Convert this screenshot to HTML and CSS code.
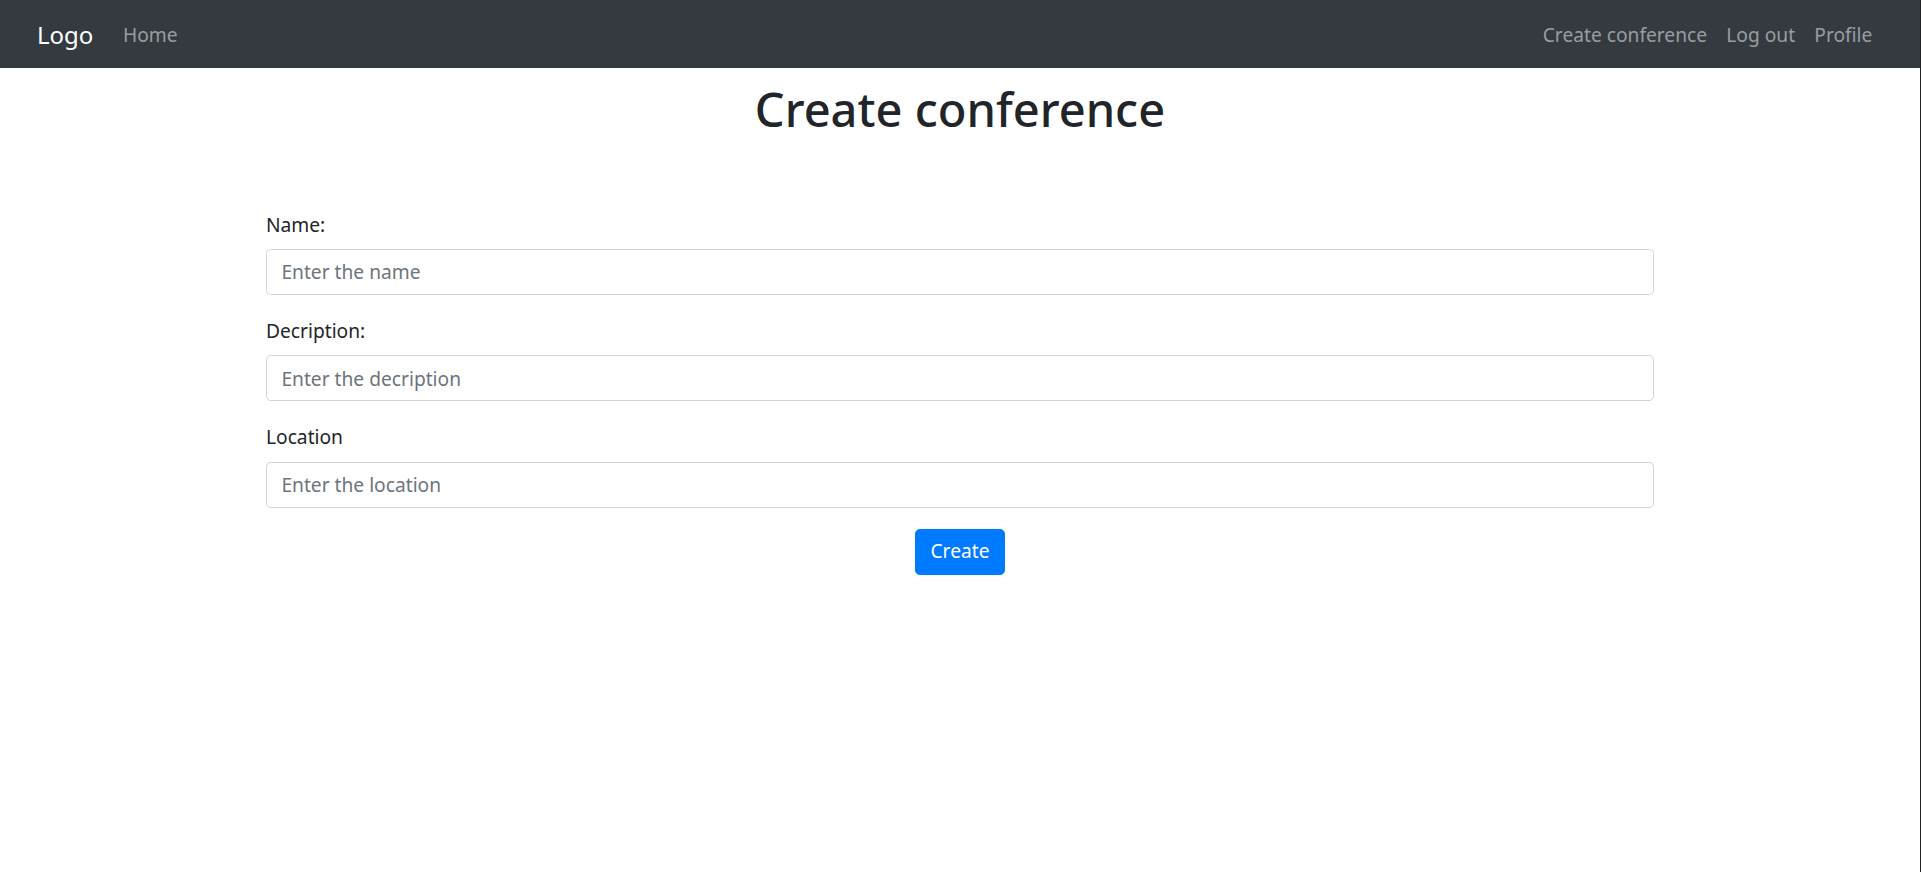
FILE: index.html
```html
<!DOCTYPE html>
<html lang="en">
<head>
<meta charset="utf-8">
<title>Create conference</title>
<link rel="stylesheet" href="styles.css">
</head>
<body>
<nav class="navbar">
  <div class="nav-left">
    <a class="brand" href="#">Logo</a>
    <a class="nav-link" href="#">Home</a>
  </div>
  <div class="nav-right">
    <a class="nav-link" href="#">Create conference</a>
    <a class="nav-link" href="#">Log out</a>
    <a class="nav-link" href="#">Profile</a>
  </div>
</nav>
<main class="page">
  <h1 class="title">Create conference</h1>
  <form class="form">
    <div class="field">
      <label class="label" for="name">Name:</label>
      <input class="input" id="name" type="text" placeholder="Enter the name">
    </div>
    <div class="field">
      <label class="label" for="desc">Decription:</label>
      <input class="input" id="desc" type="text" placeholder="Enter the decription">
    </div>
    <div class="field">
      <label class="label" for="loc">Location</label>
      <input class="input" id="loc" type="text" placeholder="Enter the location">
    </div>
    <div class="actions">
      <button class="btn" type="button">Create</button>
    </div>
  </form>
</main>
</body>
</html>
```
FILE: styles.css
```css
html, body {
  margin: 0;
  padding: 0;
  height: 100%;
}
body {
  font-family: "Noto Sans", "Open Sans", sans-serif;
  font-size: 19.2px;
  line-height: 1.5;
  color: #212529;
  background: #fff;
  border-right: 1px solid #222;
  box-sizing: border-box;
}
.navbar {
  height: 68px;
  background: #343a40;
  display: flex;
  align-items: center;
  justify-content: space-between;
  padding: 2px 38px 0 37px;
  box-sizing: border-box;
}
.nav-left, .nav-right {
  display: flex;
  align-items: center;
}
.brand {
  color: #fff;
  text-decoration: none;
  font-size: 24px;
  margin-right: 20px;
}
.nav-link {
  color: #9a9da0;
  text-decoration: none;
  padding: 0 9.6px;
}
.page {
  width: 1388px;
  margin: 0 auto;
}
.title {
  margin: 13px 0 0;
  font-size: 47px;
  font-weight: 500;
  line-height: 57.6px;
  text-align: center;
}
.form {
  margin-top: 72px;
}
.field {
  display: flex;
  flex-direction: column;
  margin-bottom: 22px;
}
.label {
  line-height: 28.8px;
  margin-bottom: 9.6px;
}
.input {
  height: 46px;
  box-sizing: border-box;
  border: 1px solid #ced4da;
  border-radius: 4.8px;
  padding: 0 14.4px;
  font: inherit;
  color: #495057;
  outline: none;
}
.input::placeholder {
  color: #6c757d;
}
.actions {
  display: flex;
  justify-content: center;
  margin-top: -1px;
}
.btn {
  height: 46px;
  padding: 0 14.4px;
  background: #007bff;
  color: #fff;
  border: 1px solid #007bff;
  border-radius: 4.8px;
  font: inherit;
}
```
